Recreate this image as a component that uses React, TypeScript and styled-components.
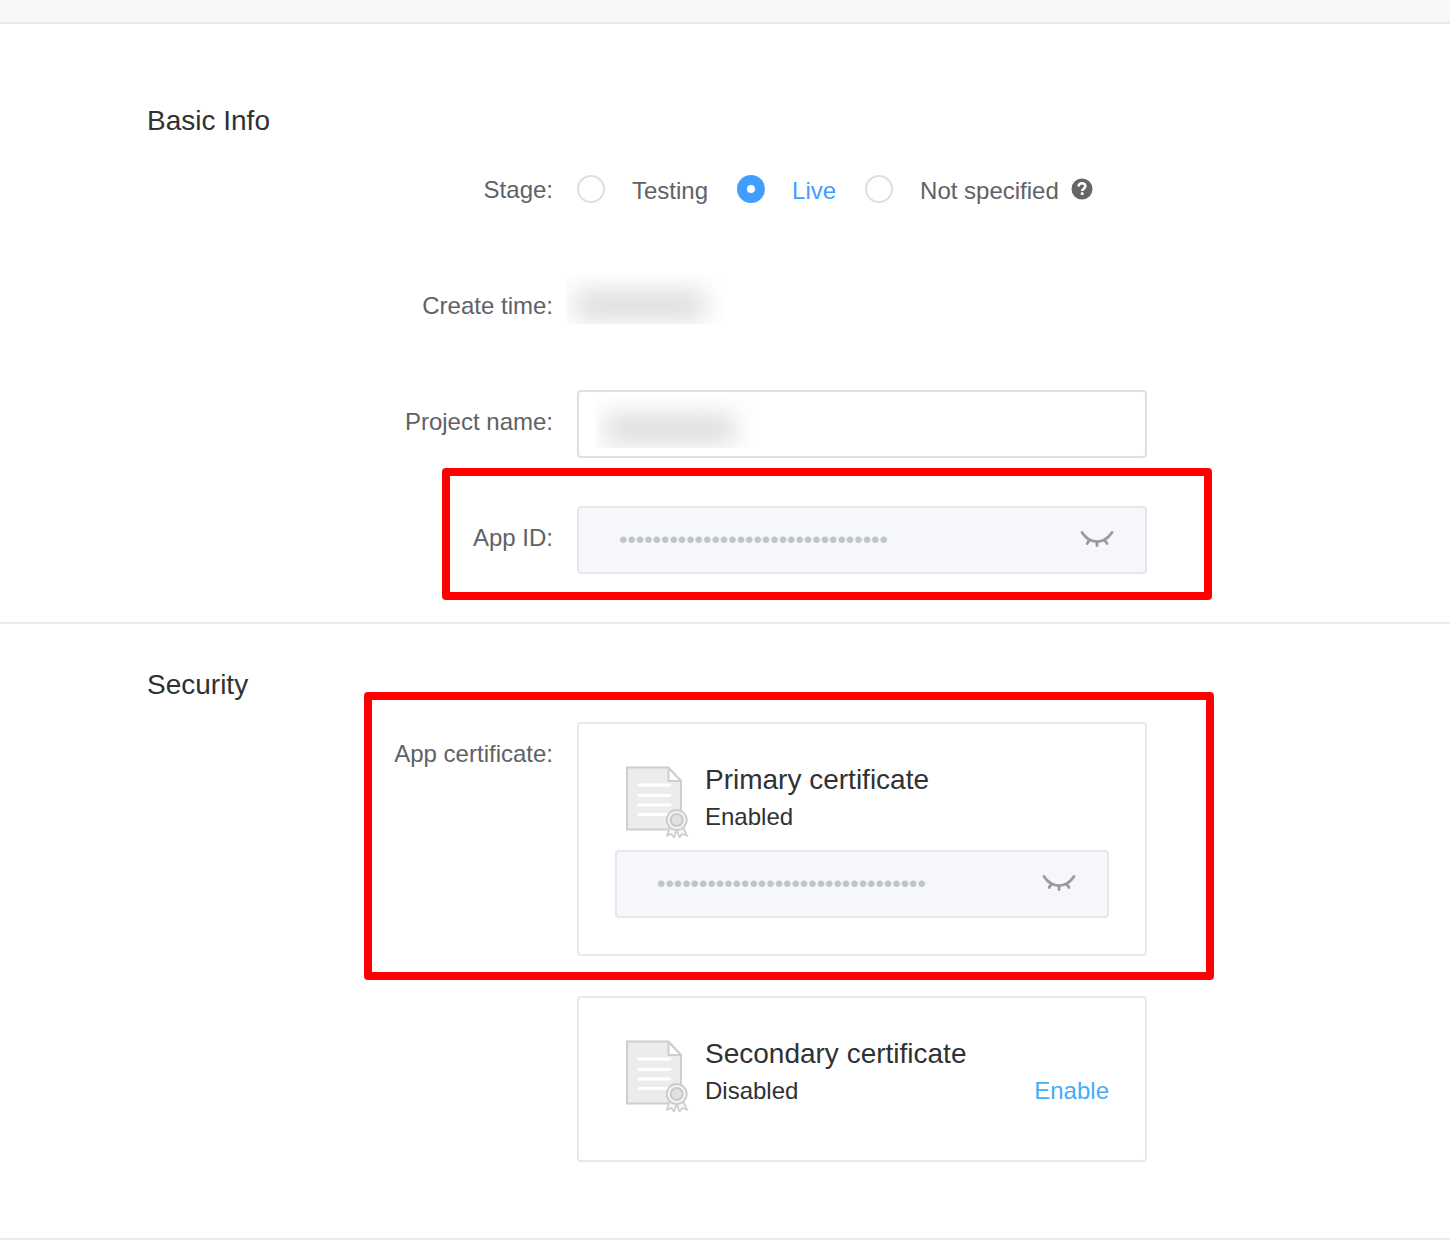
import React, { useId, useState } from 'react';
import styled, { createGlobalStyle, css } from 'styled-components';

const GlobalStyle = createGlobalStyle`
  *, *::before, *::after { box-sizing: border-box; }
  body {
    margin: 0;
    background: #ffffff;
    color: #606266;
    font-family: "Liberation Sans", Arial, Helvetica, sans-serif;
    font-size: 24px;
  }
  input, button { font: inherit; }
`;

const TopStrip = styled.header`
  height: 24px;
  background: #f7f7f7;
  border-bottom: 2px solid #e8e8e8;
`;

const Section = styled.section<{ $top: number; $bottom: number }>`
  padding: ${(p) => p.$top}px 10% ${(p) => p.$bottom}px;
  border-bottom: 2px solid #ebebeb;
`;

const SectionTitle = styled.h2`
  margin: 0 0 20px;
  padding-left: 2px;
  color: #303133;
  font-size: 28px;
  font-weight: 400;
  line-height: 34px;
`;

const Rows = styled.div`
  display: flex;
  flex-direction: column;
  gap: 48px;
`;

const Row = styled.div`
  display: grid;
  position: relative;
  grid-template-columns: minmax(200px, 408px) minmax(0, 570px);
  column-gap: 24px;
  max-width: 1002px;
  min-height: 68px;
`;

const labelText = css`
  line-height: 64px;
  text-align: right;
`;

const Label = styled.label`
  ${labelText}
`;

const Caption = styled.span`
  ${labelText}
`;

const Highlight = styled.div<{ $inset: string }>`
  position: absolute;
  inset: ${(p) => p.$inset};
  border: 8px solid #ff0000;
  border-radius: 4px;
  pointer-events: none;
`;

const RadioGroup = styled.div`
  display: flex;
  align-items: center;
  gap: 29px;
  height: 66px;
`;

const RadioLabel = styled.label<{ $active: boolean }>`
  display: flex;
  align-items: flex-start;
  gap: 27px;
  color: ${(p) => (p.$active ? '#409eff' : '#606266')};
  line-height: 32px;
  white-space: nowrap;
`;

const Radio = styled.input`
  appearance: none;
  width: 28px;
  height: 28px;
  margin: 0;
  border: 2px solid #dcdfe6;
  border-radius: 50%;
  background: #ffffff;

  &:checked {
    border: 10px solid #409eff;
  }
`;

const WithHelp = styled.div`
  display: flex;
  align-items: flex-start;
  gap: 12px;

  svg {
    margin-top: 3px;
  }
`;

const Redacted = styled.div`
  width: 160px;
  height: 50px;
  overflow: hidden;

  &::before {
    content: "";
    display: block;
    width: 132px;
    height: 30px;
    margin: 16px 8px;
    border-radius: 8px;
    background: #dddddd;
    filter: blur(12px);
  }
`;

const TimeValue = styled.div`
  margin-left: -11px;
`;

const Field = styled.div`
  position: relative;
`;

const fieldBox = css`
  display: block;
  width: 100%;
  height: 68px;
  border-radius: 4px;
`;

const TextInput = styled.input`
  ${fieldBox}
  padding: 0 30px;
  border: 2px solid #dcdfe6;
  background: #ffffff;
  color: #606266;
`;

const SecretInput = styled.input`
  ${fieldBox}
  padding: 0 84px 0 40px;
  border: 2px solid #e4e7ed;
  background: #f5f7fa;
  color: #c0c4cc;
`;

const NameCover = styled.div`
  position: absolute;
  top: 8px;
  left: 19px;
  pointer-events: none;
`;

const EyeButton = styled.button`
  position: absolute;
  top: 16px;
  right: 30px;
  width: 40px;
  height: 36px;
  padding: 0;
  border: 0;
  background: none;
  line-height: 0;
  cursor: pointer;
`;

const Cards = styled.div`
  display: flex;
  flex-direction: column;
  gap: 40px;
`;

const Card = styled.article`
  position: relative;
  padding: 36px;
  border: 2px solid #e8e8e8;
  border-radius: 4px;
`;

const CardHeader = styled.div`
  display: flex;
  align-items: flex-start;
  gap: 16px;
  height: 90px;
  padding-left: 10px;
`;

const CardText = styled.div`
  flex: 1;
  color: #303133;
`;

const CardTitle = styled.h3`
  margin: 0;
  font-size: 28px;
  font-weight: 400;
  line-height: 40px;
`;

const StatusLine = styled.div`
  display: flex;
  justify-content: space-between;
  line-height: 34px;
`;

const EnableLink = styled.a`
  color: #44adf6;
  text-decoration: none;
`;

const HelpIcon = () => (
  <svg width="22" height="22" viewBox="0 0 22 22" role="img" aria-label="Help">
    <circle cx="11" cy="11" r="10.5" fill="#666666" />
    <path d="M7.6 8.6C7.6 6.4 9 5.2 11 5.200s3.400 1.200 3.400 3c0 2.500-3.200 2.500-3.200 4.700" fill="none" stroke="#fff" strokeWidth="2.6" />
    <rect x="9.800" y="14.300" width="2.800" height="2.800" rx="0.700" fill="#fff" />
  </svg>
);

const ClosedEye = () => (
  <svg width="40" height="36" viewBox="0 0 40 36" aria-hidden="true" fill="none" stroke="#9b9b9b" strokeWidth="2.8" strokeLinecap="round">
    <path d="M5 10.500C9 16.500 14 19.600 20 19.600s11-3.100 15-9.100" />
    <path d="M12 18.500l-1.800 3M20 20v3.700M28 18.500l2 3" />
  </svg>
);

const CertificateIcon = () => (
  <svg width="64" height="78" viewBox="0 0 64 78" aria-hidden="true">
    <path d="M2 7.500H43.500L56 21V69.500H2z" fill="#ececec" stroke="#cecece" strokeWidth="2" />
    <path d="M43.500 8V21H56z" fill="#ffffff" stroke="#cecece" strokeWidth="2" strokeLinejoin="round" />
    <path d="M14 25H45M14 35.500H45M14 45H45M14 54.500H45" stroke="#ffffff" strokeWidth="2.800" strokeLinecap="round" />
    <path d="M45 67L42 75.500 46.500 74 49 77.500 51.500 70 54.500 77.500 57 74 62 75.500 58 67z" fill="#f8f8f8" stroke="#cecece" strokeWidth="1.800" />
    <circle cx="51.700" cy="60" r="10" fill="#f4f4f4" stroke="#cccccc" strokeWidth="1.800" />
    <circle cx="51.700" cy="60" r="6" fill="#e2e2e2" stroke="#c8c8c8" strokeWidth="2" />
  </svg>
);

const SECRET = '0'.repeat(32);

function SecretField({ id, name }: { id?: string; name: string }) {
  return (
    <Field>
      <SecretInput id={id} type="password" value={SECRET} aria-label={id ? undefined : name} disabled readOnly />
      <EyeButton type="button" aria-label={`Show ${name}`}>
        <ClosedEye />
      </EyeButton>
    </Field>
  );
}

interface CertificateProps {
  title: string;
  status: string;
  action?: React.ReactNode;
  children?: React.ReactNode;
}

function Certificate({ title, status, action, children }: CertificateProps) {
  return (
    <Card>
      <CardHeader>
        <CertificateIcon />
        <CardText>
          <CardTitle>{title}</CardTitle>
          <StatusLine>
            <span>{status}</span>
            {action}
          </StatusLine>
        </CardText>
      </CardHeader>
      {children}
    </Card>
  );
}

const STAGES = ['Testing', 'Live', 'Not specified'];

export default function App() {
  const id = useId();
  const [stage, setStage] = useState('Live');

  const stageOption = (option: string) => (
    <RadioLabel key={option} $active={stage === option}>
      <Radio type="radio" name="stage" checked={stage === option} onChange={() => setStage(option)} />
      {option}
    </RadioLabel>
  );

  return (
    <>
      <GlobalStyle />
      <TopStrip />
      <main>
        <Section $top={80} $bottom={48}>
          <SectionTitle>Basic Info</SectionTitle>
          <Rows>
            <Row>
              <Caption id={`${id}-stage`}>Stage:</Caption>
              <RadioGroup role="radiogroup" aria-labelledby={`${id}-stage`}>
                {STAGES.slice(0, 2).map(stageOption)}
                <WithHelp>
                  {stageOption(STAGES[2])}
                  <HelpIcon />
                </WithHelp>
              </RadioGroup>
            </Row>
            <Row>
              <Caption>Create time:</Caption>
              <TimeValue>
                <Redacted />
              </TimeValue>
            </Row>
            <Row>
              <Label htmlFor={`${id}-name`}>Project name:</Label>
              <Field>
                <TextInput id={`${id}-name`} type="text" />
                <NameCover>
                  <Redacted />
                </NameCover>
              </Field>
            </Row>
            <Row>
              <Label htmlFor={`${id}-app`}>App ID:</Label>
              <SecretField id={`${id}-app`} name="App ID" />
              <Highlight $inset="-38px -65px -26px 297px" />
            </Row>
          </Rows>
        </Section>
        <Section $top={44} $bottom={76}>
          <SectionTitle>Security</SectionTitle>
          <Row>
            <Caption>App certificate:</Caption>
            <Cards>
              <Certificate title="Primary certificate" status="Enabled">
                <SecretField name="Primary certificate" />
                <Highlight $inset="-32px -69px -26px -215px" />
              </Certificate>
              <Certificate
                title="Secondary certificate"
                status="Disabled"
                action={<EnableLink href="#enable">Enable</EnableLink>}
              />
            </Cards>
          </Row>
        </Section>
      </main>
    </>
  );
}
